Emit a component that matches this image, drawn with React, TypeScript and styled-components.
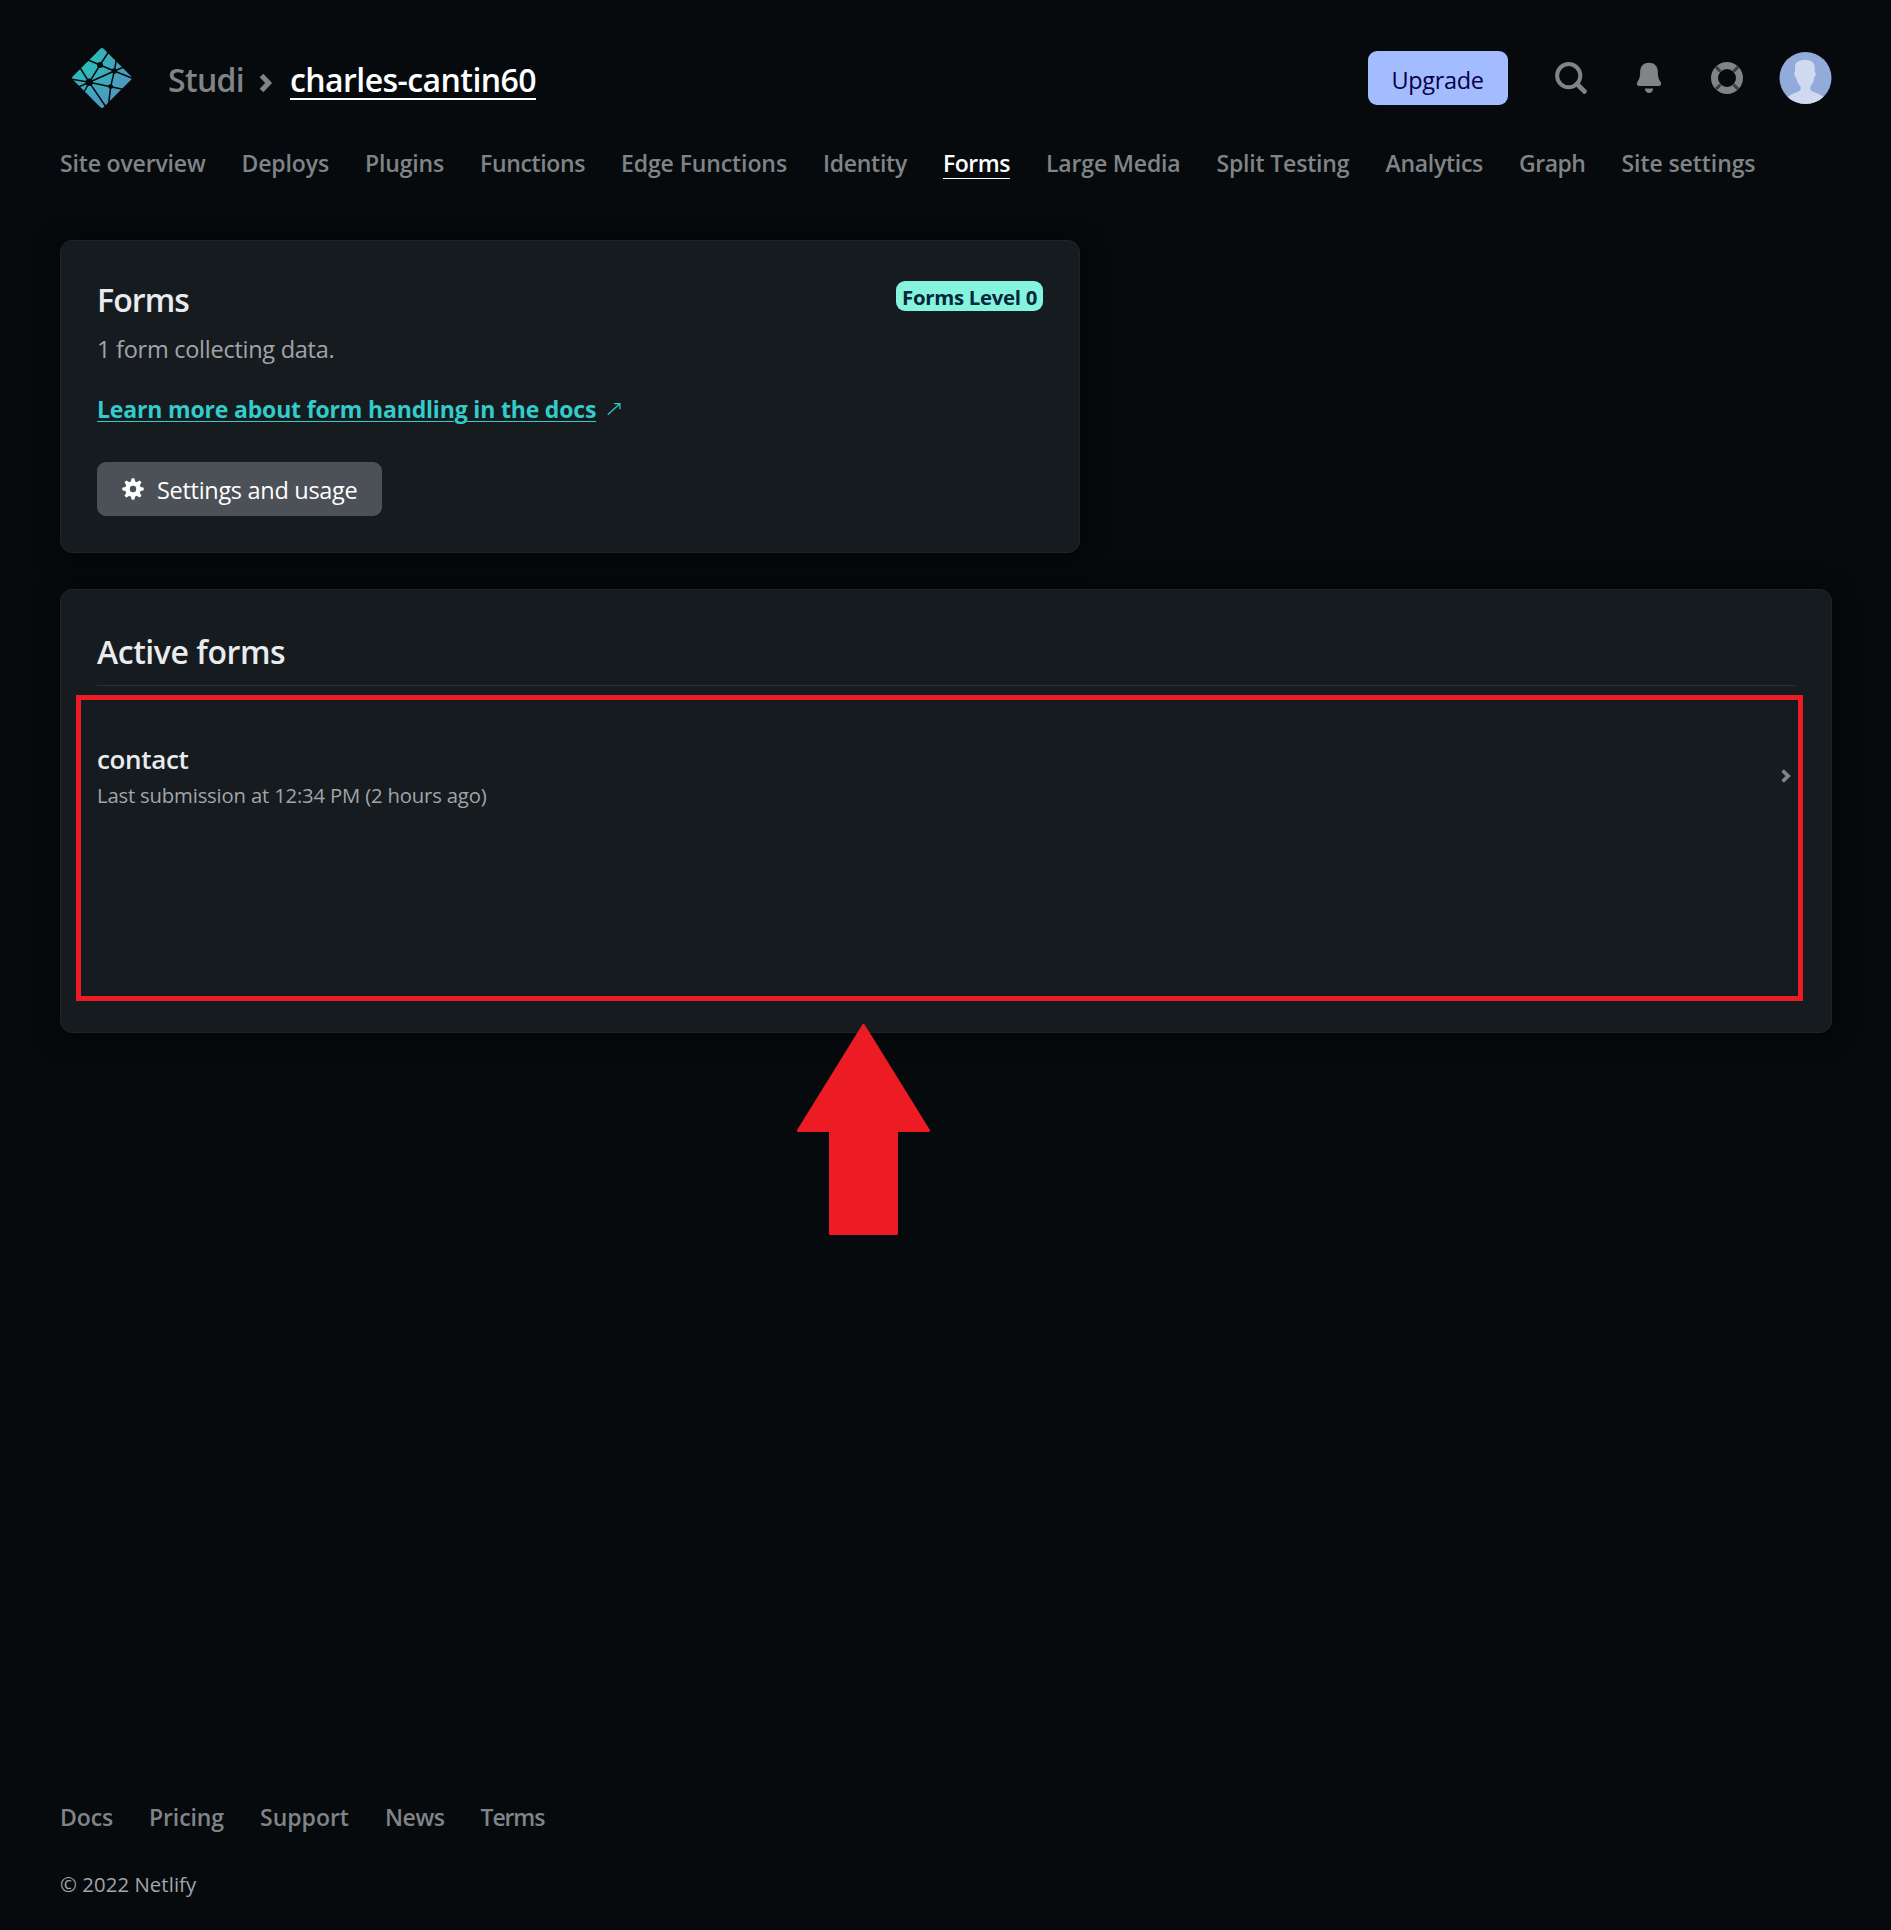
import React from "react";
import styled, { createGlobalStyle, css } from "styled-components";

const color = {
  page: "#060a0d",
  card: "#161b1f",
  cardBorder: "#1f2427",
  divider: "#2a2f33",
  muted: "#808486",
  body: "#a1a5a8",
  heading: "#e9ebed",
  teal: "#32cccc",
  annotation: "#ed1c24",
};

const GlobalStyle = createGlobalStyle`
  * { box-sizing: border-box; }
  body { margin: 0; background: ${color.page}; }
  a { color: inherit; text-decoration: none; }
  h1, h2, h3, p { margin: 0; }
  svg { display: block; flex: none; }
`;

const Page = styled.div`
  display: flex;
  flex-direction: column;
  width: 1891px;
  min-height: 1930px;
  padding: 48px 59px 31px 60px;
  background: ${color.page};
  color: ${color.heading};
  font-family: "Segoe UI", "Open Sans", "Noto Sans", sans-serif;
  white-space: nowrap;
`;

const Header = styled.header`
  display: flex;
  align-items: center;
  justify-content: space-between;
  height: 60px;
`;

const Brand = styled.div`
  display: flex;
  align-items: center;
  padding-left: 12px;
`;

const Breadcrumb = styled.div`
  display: flex;
  align-items: center;
  height: 44px;
  margin: 3px 0 0 36px;
  font-size: 32px;
  font-weight: 600;
  line-height: 44px;
`;

const Team = styled.a`
  width: 77px;
  color: ${color.muted};
  letter-spacing: -0.68px;
`;

const CrumbArrow = styled.svg`
  margin: 7px 17px 0 14px;
`;

const SiteName = styled.a`
  color: #fff;
  letter-spacing: -0.57px;
  text-decoration: underline;
  text-decoration-thickness: 2px;
  text-underline-offset: 6px;
`;

const Actions = styled.div`
  display: flex;
  align-items: center;
  gap: 46px;
`;

const buttonBase = css`
  display: flex;
  align-items: center;
  height: 54px;
  border: 0;
  border-radius: 9px;
  font-family: inherit;
  font-size: 23.5px;
  line-height: 34px;
`;

const UpgradeButton = styled.button`
  ${buttonBase}
  justify-content: center;
  width: 140px;
  margin-right: 1px;
  padding: 3px 1px 0 0;
  background: #a3bbff;
  color: #060048;
  letter-spacing: -0.35px;
`;

const Avatar = styled.svg`
  margin-left: -10px;
`;

const Nav = styled.nav`
  display: flex;
  gap: 36px;
  margin-top: 37px;
`;

const NavLink = styled.a<{ $width: number; $spacing: number; $active?: boolean }>`
  width: ${(p) => p.$width}px;
  color: ${(p) => (p.$active ? "#fff" : color.muted)};
  font-size: 23px;
  font-weight: 600;
  line-height: 36px;
  letter-spacing: ${(p) => p.$spacing}px;
  ${(p) =>
    p.$active &&
    css`
      text-decoration: underline;
      text-decoration-thickness: 1px;
      text-underline-offset: 6px;
    `}
`;

const Card = styled.section`
  position: relative;
  border: 1px solid ${color.cardBorder};
  border-radius: 12px;
  padding: 36px;
  background: ${color.card};
  box-shadow: 0 3px 24px rgba(0, 0, 0, 0.6);
`;

const SummaryCard = styled(Card)`
  display: flex;
  justify-content: space-between;
  align-items: flex-start;
  width: 1020px;
  height: 313px;
  margin-top: 59px;
`;

const ActiveCard = styled(Card)`
  height: 444px;
  margin-top: 36px;
`;

const Title = styled.h2<{ $spacing: number }>`
  font-size: 32px;
  font-weight: 600;
  line-height: 44px;
  letter-spacing: ${(p) => p.$spacing}px;
`;

const SummaryBody = styled.div`
  padding-top: 1px;
`;

const Summary = styled.p`
  margin-top: 9px;
  color: ${color.body};
  font-size: 23.5px;
  line-height: 36px;
  letter-spacing: -0.26px;
`;

const DocsRow = styled.p`
  display: flex;
  align-items: center;
  gap: 11px;
  margin-top: 24px;
  color: ${color.teal};
  line-height: 36px;
`;

const DocsLink = styled.a`
  font-size: 23px;
  font-weight: 700;
  letter-spacing: -0.17px;
  text-decoration: underline;
  text-decoration-thickness: 1px;
  text-underline-offset: 3px;
`;

const SettingsButton = styled.button`
  ${buttonBase}
  gap: 13px;
  width: 285px;
  margin-top: 35px;
  padding: 0 0 0 25px;
  background: #4c5158;
  color: #fff;
  letter-spacing: -0.3px;
`;

const ButtonLabel = styled.span`
  padding-top: 2px;
`;

const Badge = styled.span`
  display: flex;
  justify-content: center;
  width: 147px;
  height: 30px;
  margin-top: 4px;
  padding-top: 1px;
  border-radius: 9px;
  background: #85f4df;
  color: #04283a;
  font-size: 20.4px;
  font-weight: 700;
  line-height: 30px;
  letter-spacing: -0.3px;
`;

const ListHeader = styled.div`
  padding: 4px 0 11px;
  border-bottom: 1px solid ${color.divider};
`;

const FormRow = styled.a`
  display: flex;
  align-items: center;
  justify-content: space-between;
  margin-top: 55px;
  padding-right: 4px;
`;

const FormName = styled.h3`
  font-size: 26px;
  font-weight: 600;
  line-height: 36px;
  letter-spacing: -0.35px;
`;

const FormMeta = styled.p`
  margin-top: 3px;
  color: ${color.body};
  font-size: 20.3px;
  line-height: 30px;
  letter-spacing: -0.18px;
`;

const Highlight = styled.div`
  position: absolute;
  top: 105px;
  left: 15px;
  width: 1727px;
  height: 306px;
  border: 5px solid ${color.annotation};
  pointer-events: none;
`;

const Pointer = styled.svg`
  position: absolute;
  top: 434px;
  left: 736px;
`;

const Footer = styled.footer`
  margin-top: auto;
`;

const FooterLinks = styled.div`
  display: flex;
  gap: 36px;
`;

const Copyright = styled.p`
  margin-top: 34px;
  color: ${color.body};
  font-size: 20.3px;
  line-height: 30px;
  letter-spacing: 0.1px;
`;

const Logo = () => (
  <svg width="60" height="60" viewBox="0 0 60 60">
    <defs>
      <radialGradient id="brand" cx="0.1" cy="0.1" r="0.9">
        <stop offset="0" stopColor="#20c6b7" />
        <stop offset="1" stopColor="#4d9abf" />
      </radialGradient>
    </defs>
    <path
      d="M28.4 .8Q30 -.6 31.6 .8L59.3 28.5Q60.6 30 59.3 31.5L31.6 59.2Q30 60.6 28.4 59.2L.7 31.5Q-.6 30 .7 28.5Z"
      fill="url(#brand)"
    />
    <g stroke={color.page} strokeWidth="1.5" fill="none">
      <path d="M28 17L15 11.5M28 17L37.5 2.5M28 17L42.3 23M28 17L17.3 34.3" />
      <path d="M42.3 23L44.5 11M42.3 23L52 19M42.3 23L61 30.5M42.3 23L17.3 34.3M42.3 23L38.7 38.7" />
      <path d="M38.7 38.7L17.3 34.3M38.7 38.7L52 41.5M38.7 38.7L36.2 59" />
      <path d="M17.3 34.3L34 59M17.3 34.3L-1 31M17.3 34.3L8.5 20.5M17.3 34.3L6.5 39M17.3 34.3L11.5 45" />
    </g>
    <g fill={color.page}>
      <circle cx="17.3" cy="34.3" r="3.7" />
      <circle cx="28" cy="17" r="3" />
      <circle cx="42.3" cy="23" r="2.7" />
      <circle cx="38.7" cy="38.7" r="2.4" />
    </g>
  </svg>
);

const SearchIcon = () => (
  <svg width="32" height="32" viewBox="0 0 32 32" fill="none" stroke={color.muted}>
    <circle cx="13.7" cy="13.7" r="11.6" strokeWidth="4" />
    <path d="M22 22L29.4 29.4" strokeWidth="4.8" strokeLinecap="round" />
  </svg>
);

const BellIcon = () => (
  <svg width="32" height="32" viewBox="0 0 32 32" fill={color.muted}>
    <path d="M16 .8C10.8.8 7.4 4.2 7.2 9 7.1 14 6.8 16.5 4.5 19.8 3.2 21.9 4 24 6 24H26C28 24 28.8 21.9 27.5 19.8 25.2 16.5 24.9 14 24.8 9 24.6 4.2 21.2.8 16 .8Z" />
    <path d="M11.8 26.4H20.2C19.8 29.2 18.4 31 16 31S12.2 29.2 11.8 26.4Z" />
  </svg>
);

const HelpIcon = () => (
  <svg width="32" height="32" viewBox="0 0 32 32" fill="none">
    <circle cx="16" cy="16" r="12.5" stroke={color.muted} strokeWidth="7" />
    <path
      d="M4.9 4.900L9.500 9.500M27.100 4.900L22.500 9.500M4.900 27.100L9.500 22.500M27.100 27.100L22.500 22.500"
      stroke="#354047"
      strokeWidth="3"
    />
  </svg>
);

const UserAvatar = () => (
  <Avatar width="53" height="54" viewBox="0 0 53 54">
    <defs>
      <clipPath id="avatarClip">
        <circle cx="26.5" cy="27" r="26" />
      </clipPath>
    </defs>
    <g clipPath="url(#avatarClip)">
      <rect width="53" height="54" fill="#92abdb" />
      <path
        d="M25.5 9C19.5 9 15.5 11.5 16 17V21C14.800 21 15.200 26 17 26.200C17.600 30 19.500 33.500 21.700 35.500V38.500C20.500 41 12.500 42 8.500 46.500V54H45V46.500C40.500 42 32.500 41 31.300 38.500V35.500C33.500 33.500 34.800 30 35.200 26.200C37 26 37.200 21 35.700 21V16C35.200 10.500 31.500 9 25.500 9Z"
        fill="#cfdaf1"
      />
    </g>
  </Avatar>
);

const GearIcon = () => (
  <svg width="22" height="22" viewBox="-11 -11 22 22" fill="#fff">
    {[0, 45, 90, 135, 180, 225, 270, 315].map((angle) => (
      <path key={angle} d="M-2.6 -6L-1.3 -10.7H1.3L2.6 -6Z" transform={`rotate(${angle})`} />
    ))}
    <circle r="5.5" fill="none" stroke="#fff" strokeWidth="4.6" />
  </svg>
);

const ExternalIcon = () => (
  <svg width="14" height="14" viewBox="0 0 14 14" fill="none" stroke={color.teal} strokeWidth="1.2">
    <path d="M.7 12.700L12.800 1.700M7.200 1.700H12.900V7.300" />
  </svg>
);

const navItems = [
  { label: "Site overview", width: 145.5, spacing: -0.16 },
  { label: "Deploys", width: 87.5, spacing: -0.12 },
  { label: "Plugins", width: 79, spacing: -0.16 },
  { label: "Functions", width: 105, spacing: -0.36 },
  { label: "Edge Functions", width: 166, spacing: -0.1 },
  { label: "Identity", width: 84, spacing: -0.27 },
  { label: "Forms", width: 67, spacing: -0.48, active: true },
  { label: "Large Media", width: 134.5, spacing: -0.16 },
  { label: "Split Testing", width: 133, spacing: -0.18 },
  { label: "Analytics", width: 97.5, spacing: -0.28 },
  { label: "Graph", width: 66.5, spacing: -0.48 },
  { label: "Site settings", width: 134, spacing: -0.08 },
];

const footerItems = [
  { label: "Docs", width: 53, spacing: -0.1 },
  { label: "Pricing", width: 75, spacing: -0.1 },
  { label: "Support", width: 89, spacing: 0 },
  { label: "News", width: 59.5, spacing: -0.4 },
  { label: "Terms", width: 64, spacing: -1.1 },
];

export default function App() {
  return (
    <>
      <GlobalStyle />
      <Page>
        <Header>
          <Brand>
            <Logo />
            <Breadcrumb>
              <Team>Studi</Team>
              <CrumbArrow width="14" height="20" viewBox="0 0 14 20">
                <path d="M2.5 2.5L9.6 10L2.5 17.5" fill="none" stroke={color.muted} strokeWidth="5" />
              </CrumbArrow>
              <SiteName>charles-cantin60</SiteName>
            </Breadcrumb>
          </Brand>
          <Actions>
            <UpgradeButton>Upgrade</UpgradeButton>
            <SearchIcon />
            <BellIcon />
            <HelpIcon />
            <UserAvatar />
          </Actions>
        </Header>
        <Nav>
          {navItems.map((item) => (
            <NavLink key={item.label} $width={item.width} $spacing={item.spacing} $active={item.active}>
              {item.label}
            </NavLink>
          ))}
        </Nav>
        <SummaryCard>
          <SummaryBody>
            <Title $spacing={-0.9}>Forms</Title>
            <Summary>1 form collecting data.</Summary>
            <DocsRow>
              <DocsLink>Learn more about form handling in the docs</DocsLink>
              <ExternalIcon />
            </DocsRow>
            <SettingsButton>
              <GearIcon />
              <ButtonLabel>Settings and usage</ButtonLabel>
            </SettingsButton>
          </SummaryBody>
          <Badge>Forms Level 0</Badge>
        </SummaryCard>
        <ActiveCard>
          <ListHeader>
            <Title $spacing={-0.45}>Active forms</Title>
          </ListHeader>
          <FormRow>
            <div>
              <FormName>contact</FormName>
              <FormMeta>Last submission at 12:34 PM (2 hours ago)</FormMeta>
            </div>
            <svg width="10" height="14" viewBox="0 0 10 14">
              <path d="M1.6 1.5L7.1 7L1.6 12.5" fill="none" stroke={color.muted} strokeWidth="3.8" />
            </svg>
          </FormRow>
          <Highlight />
          <Pointer width="133" height="211" viewBox="0 0 133 211">
            <path
              d="M66.5 1.5L131.5 106.5H99.5V209.5H33.5V106.5H1.5Z"
              fill={color.annotation}
              stroke={color.annotation}
              strokeWidth="3"
              strokeLinejoin="round"
            />
          </Pointer>
        </ActiveCard>
        <Footer>
          <FooterLinks>
            {footerItems.map((item) => (
              <NavLink key={item.label} $width={item.width} $spacing={item.spacing}>
                {item.label}
              </NavLink>
            ))}
          </FooterLinks>
          <Copyright>© 2022 Netlify</Copyright>
        </Footer>
      </Page>
    </>
  );
}
